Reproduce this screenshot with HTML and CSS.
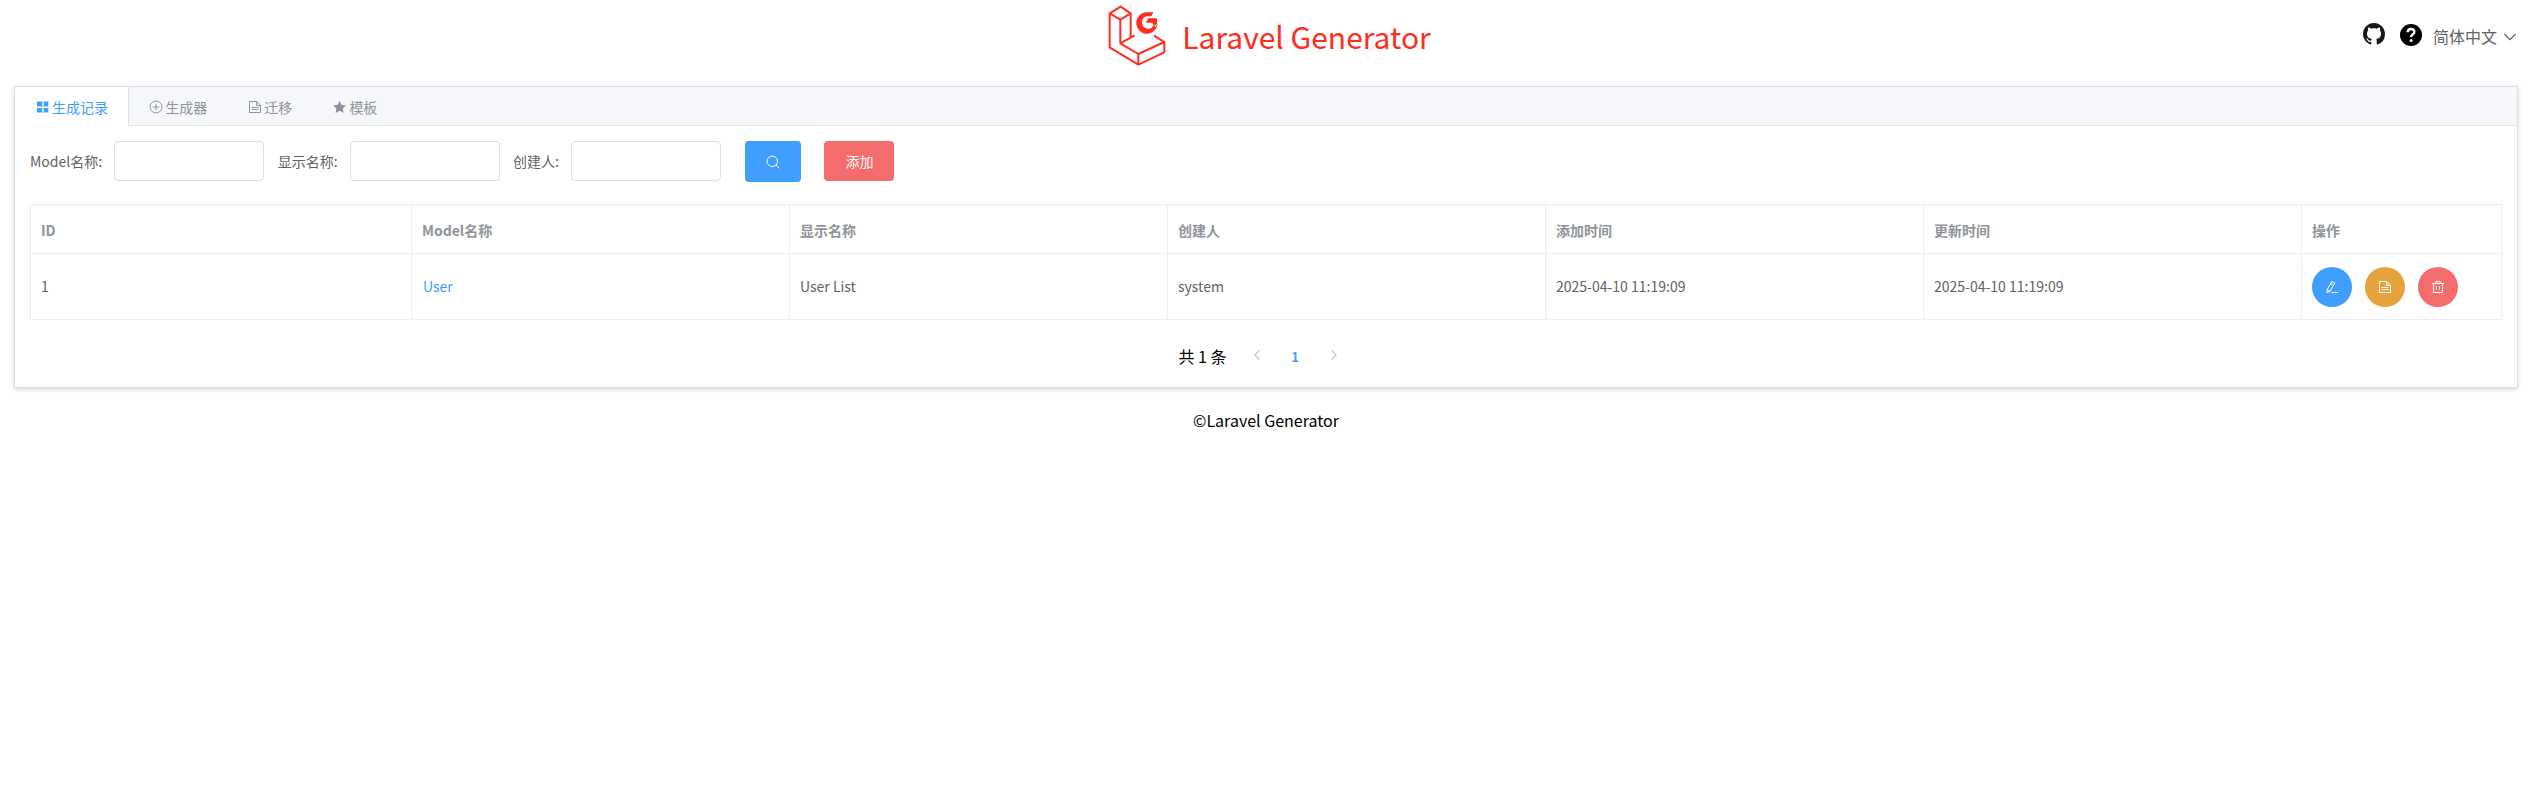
FILE: index.html
```html
<!DOCTYPE html>
<html lang="zh-CN">
<head>
<meta charset="utf-8">
<title>Laravel Generator</title>
<link rel="stylesheet" href="styles.css">
</head>
<body>
<svg class="sprite" aria-hidden="true">
  <symbol id="doc" viewBox="0 0 14 14"><path d="M1.500 1.500h7.200l3.800 3.800v7.200h-11zM8.500 1.700v3.800h3.800M3.600 7.500h6.800M3.600 9.500h6.800" fill="none" stroke="currentColor"/></symbol>
</svg>
<header class="header">
  <div class="brand">
    <svg class="logo" viewBox="54 15 174 186" fill="none" stroke="currentColor" stroke-width="6" stroke-linejoin="round">
      <path d="M134 106 91 130V59L59 40 92 20 122 40 91 59M59 40V142L145 194 223 157V126L145 162 91 130M122 40V112M145 162V194M223 126 192 107"/>
      <path d="M190 37H169A32 32 0 1 0 199 84L204 70 196 80 190 76 185 83A19 19 0 1 1 169 49H184ZM175 55H201V72L194 77 188 72V68H167Z" fill="currentColor" stroke="none"/>
    </svg>
    <h1 class="title">Laravel Generator</h1>
  </div>
  <nav class="tools">
    <svg class="github" viewBox="0 0 16 16"><path fill="#191717" d="M8 0C3.58 0 0 3.58 0 8c0 3.54 2.29 6.53 5.47 7.59.4.07.55-.17.55-.38 0-.19-.01-.82-.01-1.49-2.01.37-2.53-.49-2.69-.94-.09-.23-.48-.94-.82-1.13-.28-.15-.68-.52-.01-.53.63-.01 1.08.58 1.23.82.72 1.21 1.87.87 2.33.66.07-.52.28-.87.51-1.07-1.78-.2-3.64-.89-3.64-3.95 0-.87.31-1.59.82-2.15-.08-.2-.36-1.02.08-2.12 0 0 .67-.21 2.2.82.64-.18 1.32-.27 2-.27s1.36.09 2 .27c1.53-1.04 2.2-.82 2.2-.82.44 1.1.16 1.92.08 2.12.51.56.82 1.27.82 2.15 0 3.07-1.87 3.75-3.65 3.95.29.25.54.73.54 1.48 0 1.07-.01 1.93-.01 2.2 0 .21.15.46.55.38A8.01 8.01 0 0 0 16 8c0-4.42-3.58-8-8-8z"/></svg>
    <svg class="help" viewBox="0 0 22 22"><circle cx="11" cy="11" r="11"/><path d="M7.700 8.300C7.800 6.200 9.100 5 11 5s3.300 1.100 3.300 2.900c0 2.300-3.200 2.500-3.200 5.200" fill="none" stroke="#fff" stroke-width="2.400"/><circle cx="11.100" cy="16.600" r="1.500" fill="#fff"/></svg>
    <span class="lang">简体中文</span>
    <svg class="caret" viewBox="0 0 12 8"><path d="m.5 1 5.500 5.700L11.500 1" fill="none" stroke="currentColor" stroke-width="1.200"/></svg>
  </nav>
</header>
<main class="card">
  <div class="tabs">
    <div class="tab active"><svg class="icon" viewBox="0 0 14 14" fill="currentColor"><path d="M1 1.500h5.300v5H1zM7.700 1.500h4.600v5H7.700zM1 8h5.300v4.500H1zM7.700 8h4.600v4.500H7.700z"/></svg>生成记录</div>
    <div class="tab"><svg class="icon" viewBox="0 0 14 14" fill="none" stroke="currentColor"><circle cx="7" cy="7" r="6"/><path d="M7 3.800v6.400M3.800 7h6.400"/></svg>生成器</div>
    <div class="tab"><svg class="icon"><use href="#doc"/></svg>迁移</div>
    <div class="tab"><svg class="icon" viewBox="0 0 14 14" fill="currentColor"><path d="m6.600.8 1.900 4 4.500.6-3.200 3 .8 4.600-4-2.300L2.600 13l.8-4.600-3.200-3 4.500-.6z"/></svg>模板</div>
  </div>
  <div class="content">
    <form class="filters">
      <label class="label">Model名称:</label><input class="input" type="text">
      <label class="label">显示名称:</label><input class="input" type="text">
      <label class="label">创建人:</label><input class="input" type="text">
      <button class="btn search" type="button"><svg class="icon" viewBox="0 0 14 14" fill="none" stroke="currentColor"><circle cx="6.300" cy="6.300" r="5.200"/><path d="m10 10 3.300 3.300"/></svg></button>
      <button class="btn add" type="button">添加</button>
    </form>
    <table class="table">
      <colgroup><col class="first"><col><col><col><col><col><col class="ops"></colgroup>
      <thead><tr><th>ID</th><th>Model名称</th><th>显示名称</th><th>创建人</th><th>添加时间</th><th>更新时间</th><th>操作</th></tr></thead>
      <tbody><tr>
        <td>1</td><td><a class="link">User</a></td><td>User List</td><td>system</td><td>2025-04-10 11:19:09</td><td>2025-04-10 11:19:09</td>
        <td class="ops-cell"><div class="actions">
          <button class="round edit"><svg class="icon" viewBox="0 0 14 14" fill="none" stroke="currentColor"><path d="M6.800 1.500 9.800 3 5 11.300 2 12.800V9.800zM5.500 3.700l3 1.700M2 9.800l3 1.500M6.500 12.500H13"/></svg></button>
          <button class="round file"><svg class="icon"><use href="#doc"/></svg></button>
          <button class="round remove"><svg class="icon" viewBox="0 0 14 14" fill="none" stroke="currentColor"><path d="M1 3.500h12M2.500 3.500v9h9v-9M4.800 3.500v-2h4.400v2M5.500 6v4M8.500 6v4"/></svg></button>
        </div></td>
      </tr></tbody>
    </table>
    <div class="pager">
      <span class="total">共 1 条</span>
      <svg class="arrow" viewBox="0 0 6 10"><path d="M5.300.5.8 5l4.500 4.500" fill="none" stroke="currentColor" stroke-width="1.300"/></svg>
      <span class="page">1</span>
      <svg class="arrow" viewBox="0 0 6 10"><path d="M.7.5 5.200 5 .7 9.500" fill="none" stroke="currentColor" stroke-width="1.300"/></svg>
    </div>
  </div>
</main>
<footer class="footer">©Laravel Generator</footer>
</body>
</html>
```
FILE: styles.css
```css
* { box-sizing: border-box; }
body { margin: 0; background: #fff; color: #000; font-family: "Noto Sans CJK SC", sans-serif; font-size: 16px; }
.sprite { position: absolute; width: 0; height: 0; }
.header { display: grid; grid-template-columns: 1fr auto 1fr; height: 86px; padding: 0 26px 0 22px; }
.brand { grid-column: 2; display: flex; align-items: flex-start; margin-right: -1px; color: #ff2d20; }
.logo { width: 58px; height: 62px; margin: 5px 16px 0 0; }
.title { margin: 14px 0 0; font-size: 30px; font-weight: 400; line-height: 44px; }
.tools { display: flex; justify-content: flex-end; align-items: center; height: 72px; color: #606266; }
.github { width: 22px; height: 22px; margin: 0 15px 4px 0; }
.help { width: 22px; height: 22px; margin: 0 11px 2px 0; }
.lang { line-height: 24px; }
.caret { width: 12px; height: 8px; margin: 2px 0 0 7px; }
.card { margin: 0 24px 0 14px; height: 302px; border: 1px solid #dcdfe6; background: #fff; box-shadow: 0 2px 4px rgba(0,0,0,.12), 0 0 6px rgba(0,0,0,.04); }
.tabs { display: flex; height: 39px; background: #f5f7fa; border-bottom: 1px solid #e4e7ed; }
.tab { display: flex; align-items: center; gap: 2.500px; height: 39px; padding: 0 20px 0 20.600px; font-size: 14px; color: #909399; }
.tab.active { color: #409eff; background: #fff; border-right: 1px solid #dcdfe6; margin-right: -1px; }
.icon { width: 14px; height: 14px; flex: none; }
.content { padding: 15px; }
.filters { display: flex; align-items: flex-start; height: 63px; }
.label { font-size: 14px; line-height: 40px; color: #606266; padding-right: 12px; }
.input { width: 150px; height: 40px; margin-right: 13.500px; border: 1px solid #dcdfe6; border-radius: 4px; background: #fff; }
.btn { display: flex; align-items: center; justify-content: center; padding: 0; border: 0; border-radius: 4px; color: #fff; font: 14px "Noto Sans CJK SC", sans-serif; }
.search { width: 56px; height: 41px; margin: 0 23px 0 11px; background: #409eff; }
.add { width: 70px; height: 40px; background: #f56c6c; }
.table { width: 2472px; table-layout: fixed; border-collapse: separate; border-spacing: 0; border: 1px solid #ebeef5; border-width: 1px 0 0 1px; font-size: 14px; color: #606266; }
.first { width: 381px; }
.ops { width: 200px; }
.table th, .table td { padding: 0 10px; border: 1px solid #ebeef5; border-width: 0 1px 1px 0; text-align: left; }
.table th { height: 49px; padding-top: 2px; color: #909399; font-weight: 700; }
.table td { height: 66px; padding-bottom: 2px; }
.table .ops-cell { padding-bottom: 0; }
.link { color: #409eff; padding-left: 1px; }
.actions { display: flex; gap: 13px; }
.round { display: flex; align-items: center; justify-content: center; width: 40px; height: 40px; padding: 0; border: 0; border-radius: 50%; color: #fff; }
.edit { background: #409eff; }
.file { background: #e6a23c; }
.remove { background: #f56c6c; }
.pager { display: flex; justify-content: center; align-items: center; height: 28px; margin: 22px 0 0; padding-right: 17px; }
.total { margin-right: 27px; }
.arrow { width: 6px; height: 10px; margin-bottom: 2px; color: #c0c4cc; }
.page { width: 71px; text-align: center; font-size: 13px; font-weight: 700; color: #409eff; }
.footer { margin-top: 20px; padding-right: 10px; text-align: center; line-height: 24px; }
```
